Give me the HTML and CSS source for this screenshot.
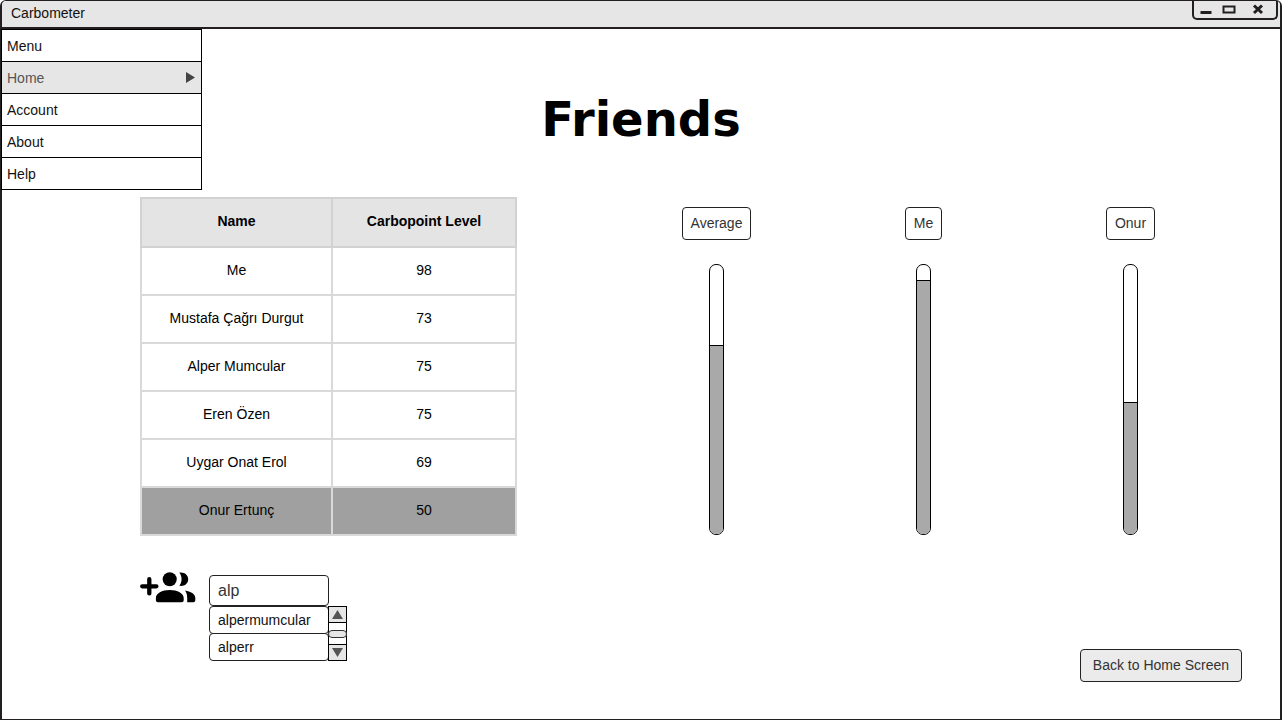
FILE: index.html
```html
<!DOCTYPE html>
<html lang="en">
<head>
<meta charset="utf-8">
<meta name="viewport" content="width=device-width, initial-scale=1">
<title>Carbometer</title>
<link rel="stylesheet" href="styles.css">
</head>
<body>
<div class="window">
  <header class="titlebar">
    <span class="app-name">Carbometer</span>
    <div class="window-controls">
      <button type="button" class="window-button" aria-label="Minimize">
        <svg width="12" height="14" viewBox="0 0 12 14"><path d="M0.5 11.500h11" stroke="#231f20" stroke-width="3"/></svg>
      </button>
      <button type="button" class="window-button" aria-label="Maximize">
        <svg width="14" height="14" viewBox="0 0 14 14"><rect x="1.5" y="5.500" width="11" height="6" fill="none" stroke="#231f20" stroke-width="2"/></svg>
      </button>
      <button type="button" class="window-button close" aria-label="Close">
        <svg width="12" height="14" viewBox="0 0 12 14"><path d="M2 4.500l8 7.500M10 4.500l-8 7.500" stroke="#231f20" stroke-width="3"/></svg>
      </button>
    </div>
  </header>

  <div class="page">
    <nav class="menu" aria-label="Main">
      <a class="menu-item" href="#menu">Menu</a>
      <a class="menu-item active" href="#home">Home
        <svg width="9" height="11" viewBox="0 0 9 11"><path d="M0 0l9 5.500-9 5.500z" fill="#444"/></svg>
      </a>
      <a class="menu-item" href="#account">Account</a>
      <a class="menu-item" href="#about">About</a>
      <a class="menu-item" href="#help">Help</a>
    </nav>

    <main class="content">
      <h1 class="heading">Friends</h1>

      <div class="overview">
        <table class="friends">
          <thead>
            <tr><th class="name-col" scope="col">Name</th><th scope="col">Carbopoint Level</th></tr>
          </thead>
          <tbody>
            <tr><td>Me</td><td>98</td></tr>
            <tr><td>Mustafa Çağrı Durgut</td><td>73</td></tr>
            <tr><td>Alper Mumcular</td><td>75</td></tr>
            <tr><td>Eren Özen</td><td>75</td></tr>
            <tr><td>Uygar Onat Erol</td><td>69</td></tr>
            <tr class="selected"><td>Onur Ertunç</td><td>50</td></tr>
          </tbody>
        </table>

        <div class="gauges">
          <div class="gauge">
            <span class="gauge-label">Average</span>
            <div class="track"><div class="fill" style="height:70.3%"></div></div>
          </div>
          <div class="gauge">
            <span class="gauge-label">Me</span>
            <div class="track"><div class="fill" style="height:94.5%"></div></div>
          </div>
          <div class="gauge">
            <span class="gauge-label">Onur</span>
            <div class="track"><div class="fill" style="height:49.2%"></div></div>
          </div>
        </div>
      </div>

      <div class="actions">
        <div class="add-friend">
          <svg class="add-icon" width="56" height="32" viewBox="0 0 56 32" aria-hidden="true">
            <path d="M2.200 14.300h14.200M9.300 7.200v14.200" stroke="#000" stroke-width="4.300" stroke-linecap="round"/>
            <circle cx="29.700" cy="7.300" r="7"/>
            <path d="M29.700 18C22 18 15.900 21.500 15.900 26v2.200q0 2 2 2h23.800q2 0 2-2V26C43.700 21.500 37.500 18 29.700 18z"/>
            <path d="M39.300.600C44.300-.200 48.200 2.800 48.200 7.200s-3.900 7.500-8.900 6.600C42.300 10 42.300 4.400 39.300.600z"/>
            <path d="M45 18.600C50.500 19.400 55.300 22 55.300 26.200v2q0 2-2 2H47.200V26C47.200 22.800 46.400 20.500 45 18.600z"/>
          </svg>
          <div class="search">
            <input class="search-box" type="text" value="alp" aria-label="Add a friend">
            <div class="results">
              <div class="result-list">
                <button type="button" class="result">alpermumcular</button>
                <button type="button" class="result">alperr</button>
              </div>
              <div class="scrollbar">
                <button type="button" class="scroll-button" aria-label="Scroll up">
                  <svg width="11" height="9" viewBox="0 0 11 9"><path d="M0 9L5.500 0 11 9z" fill="#555"/></svg>
                </button>
                <div class="scroll-thumb"></div>
                <button type="button" class="scroll-button" aria-label="Scroll down">
                  <svg width="11" height="9" viewBox="0 0 11 9"><path d="M0 0l5.500 9L11 0z" fill="#555"/></svg>
                </button>
              </div>
            </div>
          </div>
        </div>
        <button type="button" class="back">Back to Home Screen</button>
      </div>
    </main>
  </div>
</div>
</body>
</html>
```
FILE: styles.css
```css
* { box-sizing: border-box; }

body {
  margin: 0;
  background: #fff;
  color: #000;
  font: 14px/16px "Liberation Sans", Arial, sans-serif;
}

button, input { font: inherit; color: inherit; margin: 0; }
svg { display: block; }

.window {
  display: flex;
  flex-direction: column;
  min-height: 100vh;
  border: 2px solid #231f20;
  border-top-width: 1px;
  border-bottom-width: 1px;
  border-radius: 6px 6px 0 0;
}

.titlebar {
  display: flex;
  justify-content: space-between;
  align-items: flex-start;
  height: 28px;
  padding: 0 2px 0 9px;
  border-bottom: 2px solid #231f20;
  border-radius: 4px 4px 0 0;
  background: #e6e6e6;
}

.app-name { padding-top: 4px; color: #111; }

.window-controls {
  display: flex;
  align-items: flex-start;
  gap: 10px;
  height: 19px;
  padding: 0 12px 0 6px;
  border: 2px solid #231f20;
  border-top: 0;
  border-radius: 0 0 5px 5px;
}

.window-button {
  display: flex;
  padding: 0;
  border: 0;
  background: none;
}

.close { margin-left: 6px; }

.page { position: relative; flex: 1; }

.menu {
  position: absolute;
  top: 0;
  left: -1px;
  width: 201px;
  border: 1px solid #000;
  background: #fff;
}

.menu-item {
  display: flex;
  align-items: center;
  justify-content: space-between;
  height: 32px;
  padding: 0 6px 0 5px;
  border-bottom: 1px solid #000;
  color: #111;
  text-decoration: none;
}

.menu-item:last-child { height: 31px; border-bottom: 0; }
.active { background: #e6e6e6; color: #555; }

.content { padding: 60px 38px 36px 138px; }

.heading {
  margin: 0 100px 48px 0;
  font: bold 48px/60px "DejaVu Sans", sans-serif;
  text-align: center;
}

.overview {
  display: flex;
  align-items: flex-start;
  gap: 96px;
}

.friends {
  width: 377px;
  border-collapse: collapse;
  table-layout: fixed;
  text-align: center;
}

.friends th, .friends td {
  height: 48px;
  padding: 0 0 2px;
  border: 2px solid #d9d9d9;
}

.friends th { height: 49px; padding-bottom: 4px; border-color: #d2d2d2; background: #e4e4e4; }
.name-col { width: 191px; }
.selected { background: #a0a0a0; }

.gauges {
  display: grid;
  grid-template-columns: repeat(3, 1fr);
  flex: 1;
  padding: 10px 8px 0 0;
}

.gauge {
  display: flex;
  flex-direction: column;
  align-items: center;
  gap: 24px;
}

.gauge-label {
  padding: 8px;
  border: 1px solid #222;
  border-radius: 4px;
  color: #333;
  line-height: 15px;
}

.track {
  display: flex;
  align-items: flex-end;
  width: 15px;
  height: 271px;
  border: 1px solid #000;
  border-radius: 7px;
  overflow: hidden;
}

.fill {
  width: 100%;
  border-top: 1px solid #000;
  background: #a9a9a9;
}

.actions {
  display: flex;
  align-items: flex-start;
  justify-content: space-between;
  padding-top: 36px;
}

.add-friend { display: flex; gap: 13px; }

.search { padding-top: 3px; }

.search-box {
  display: block;
  width: 120px;
  height: 31px;
  padding: 0 8px;
  border: 1px solid #222;
  border-radius: 4px;
  background: #fff;
  color: #333;
  font-size: 16px;
}

.results { display: flex; }

.result-list { width: 119px; }

.result {
  display: block;
  width: 120px;
  height: 28px;
  padding: 0 8px;
  border: 1px solid #222;
  border-radius: 4px;
  background: #fff;
  color: #111;
  text-align: left;
}

.result + .result { margin-top: -1px; }

.scrollbar {
  display: flex;
  flex-direction: column;
  align-items: center;
  justify-content: space-between;
  width: 19px;
  border: 1px solid #000;
}

.scroll-button {
  display: flex;
  align-items: center;
  justify-content: center;
  width: 100%;
  height: 16px;
  padding: 0;
  border: 0;
  border-bottom: 1px solid #000;
  background: #e6e6e6;
}

.scroll-button:last-child { border-top: 1px solid #000; border-bottom: 0; }

.scroll-thumb {
  width: 19px;
  height: 8px;
  border: 1px solid #333;
  border-radius: 4px;
  background: #e6e6e6;
}

.back {
  height: 33px;
  margin-top: 77px;
  padding: 0 12px 2px;
  border: 1px solid #222;
  border-radius: 4px;
  background: #ebebeb;
  color: #333;
}
```
